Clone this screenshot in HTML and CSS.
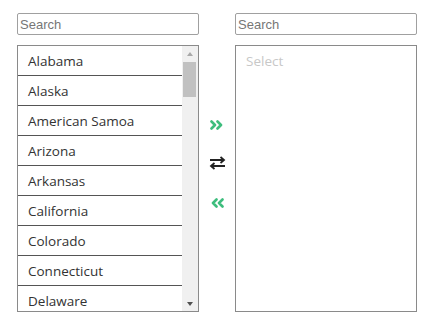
FILE: index.html
```html
<!DOCTYPE html>
<html>
<head>
    <meta charset="UTF-8">
    <title>Dual list</title>
    <link rel="stylesheet" href="styles.css">
</head>
<body>
    <div class="dual">
        <div class="pane">
            <input class="search" type="text" placeholder="Search">
            <div class="list">
                <div class="rows">
                    <div class="item">Alabama</div>
                    <div class="item">Alaska</div>
                    <div class="item">American Samoa</div>
                    <div class="item">Arizona</div>
                    <div class="item">Arkansas</div>
                    <div class="item">California</div>
                    <div class="item">Colorado</div>
                    <div class="item">Connecticut</div>
                    <div class="item">Delaware</div>
                </div>
                <div class="scrollbar">
                    <span class="arrow up"></span>
                    <div class="track"><div class="thumb"></div></div>
                    <span class="arrow down"></span>
                </div>
            </div>
        </div>

        <div class="actions">
            <button class="act" title="Move all right">
                <svg width="14" height="10" viewBox="0 0 14 10"><path d="M1.5 1.5 L5 5 L1.5 8.5 M7.5 1.5 L11 5 L7.5 8.5" fill="none" stroke="#3dbd7d" stroke-width="2.6" stroke-linecap="round" stroke-linejoin="round"/></svg>
            </button>
            <button class="act swap" title="Swap">
                <svg width="17" height="14" viewBox="0 0 17 14"><path d="M1 4 H15 M11.5 1 L15 4 L11.5 7" fill="none" stroke="#222" stroke-width="1.8"/><path d="M16 10 H2 M5.5 7 L2 10 L5.5 13" fill="none" stroke="#222" stroke-width="1.8"/></svg>
            </button>
            <button class="act back" title="Move all left">
                <svg width="14" height="10" viewBox="0 0 14 10"><path d="M6.5 1.5 L3 5 L6.5 8.5 M12.5 1.5 L9 5 L12.5 8.5" fill="none" stroke="#3dbd7d" stroke-width="2.6" stroke-linecap="round" stroke-linejoin="round"/></svg>
            </button>
        </div>

        <div class="pane">
            <input class="search" type="text" placeholder="Search">
            <div class="list empty">
                <div class="placeholder">Select</div>
            </div>
        </div>
    </div>
</body>
</html>
```

FILE: styles.css
```css
body {
    margin: 0;
    background: #fff;
    font-family: 'Open Sans', 'Segoe UI', sans-serif;
}
.dual {
    display: flex;
    padding: 13px 0 0 17px;
}
.pane {
    width: 182px;
    display: flex;
    flex-direction: column;
}
.search {
    box-sizing: border-box;
    width: 182px;
    height: 22px;
    margin: 0 0 10px 0;
    padding: 0 2px;
    border: 1px solid #a0a0a0;
    border-radius: 2px;
    font-family: 'Liberation Sans', Arial, sans-serif;
    font-size: 13px;
    color: #333;
    outline: none;
}
.search::placeholder {
    color: #767676;
}
.list {
    box-sizing: border-box;
    height: 267px;
    border: 1px solid #8a8a8a;
    display: flex;
    overflow: hidden;
}
.rows {
    flex: 1;
    overflow: hidden;
}
.item {
    box-sizing: border-box;
    height: 30px;
    line-height: 30px;
    padding-left: 10px;
    border-bottom: 1px solid #555;
    font-size: 13.5px;
    color: #333;
    white-space: nowrap;
    overflow: hidden;
}
.scrollbar {
    width: 16px;
    background: #f0f0f0;
    display: flex;
    flex-direction: column;
}
.arrow {
    height: 15px;
    display: flex;
    align-items: center;
    justify-content: center;
}
.arrow::before {
    content: "";
    border-left: 3.5px solid transparent;
    border-right: 3.5px solid transparent;
}
.arrow.up::before {
    border-bottom: 4px solid #a8a8a8;
}
.arrow.down::before {
    border-top: 4px solid #505050;
}
.track {
    flex: 1;
    padding: 1px 2px 0 1px;
}
.thumb {
    height: 35px;
    background: #c1c1c1;
}
.placeholder {
    padding: 6px 0 0 10px;
    font-size: 13.5px;
    color: #c8c8c8;
}
.actions {
    width: 36px;
    display: flex;
    flex-direction: column;
    align-items: center;
    padding-top: 104px;
}
.act {
    width: 20px;
    height: 16px;
    padding: 0;
    border: none;
    background: none;
    display: flex;
    align-items: center;
    justify-content: center;
    cursor: pointer;
}
.act.swap {
    margin-top: 22px;
}
.act.back {
    margin-top: 24px;
}
```
